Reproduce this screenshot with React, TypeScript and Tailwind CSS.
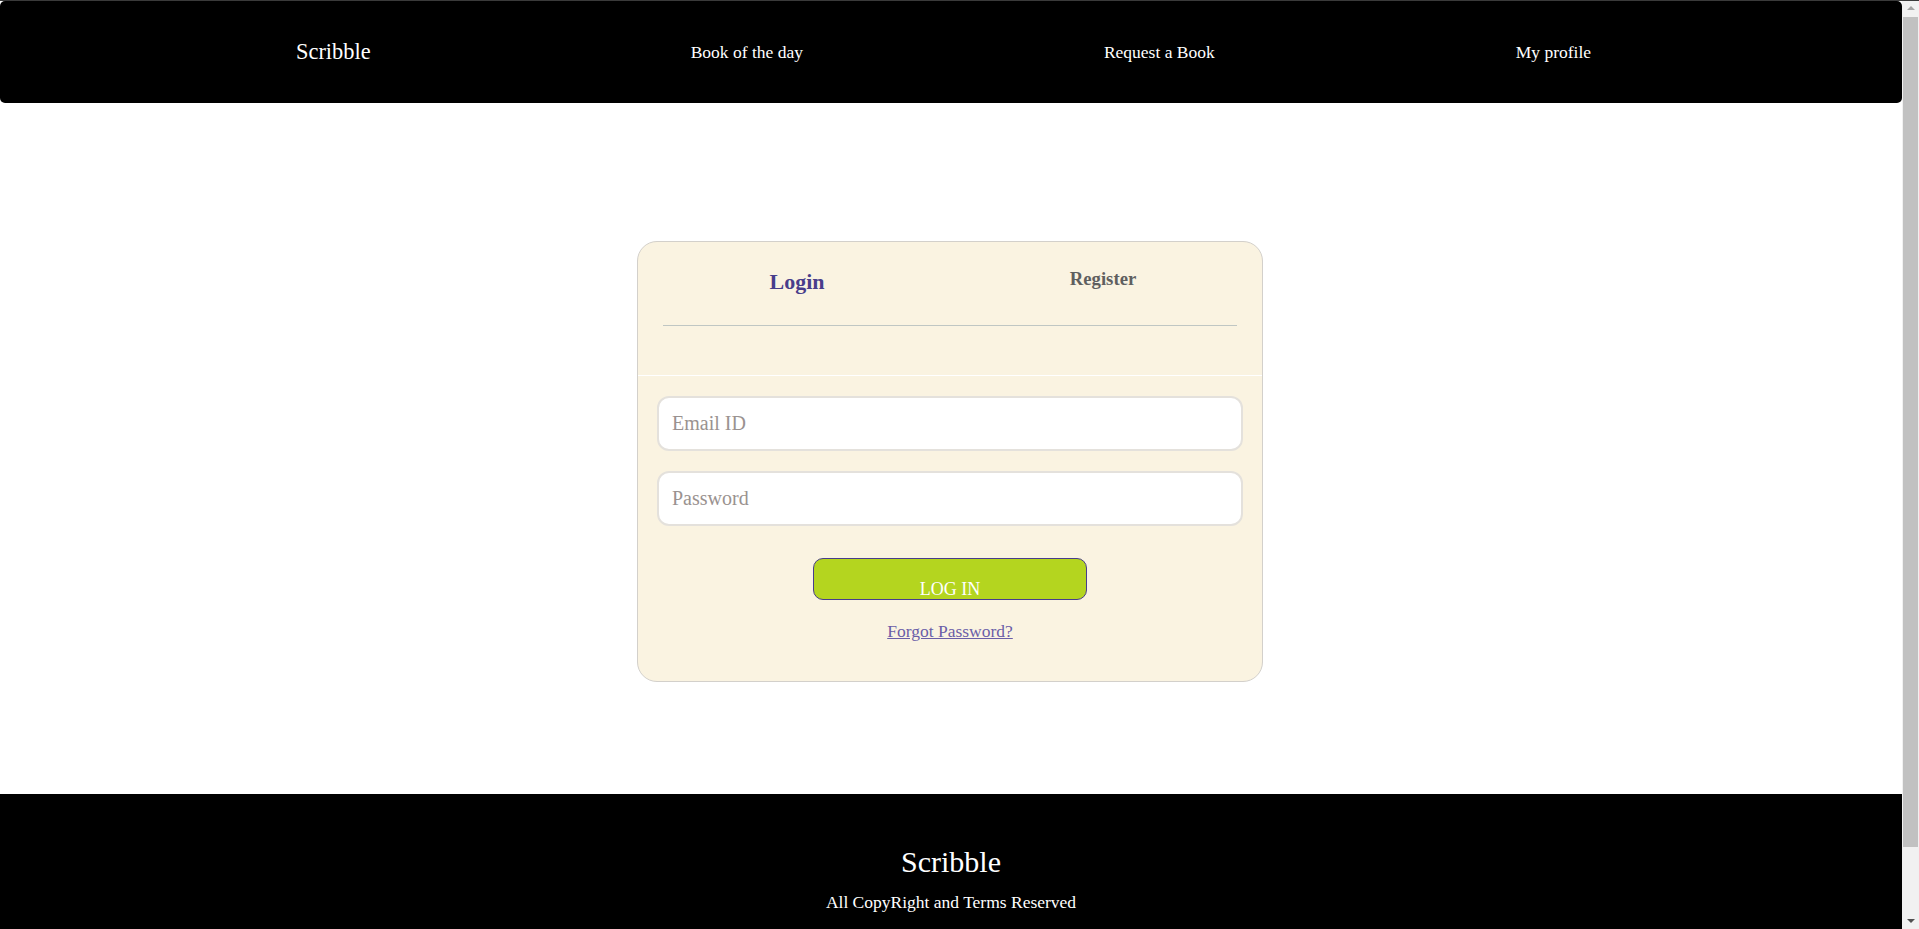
export default function App() {
  return (
    <div className="min-h-screen bg-white font-['Liberation_Serif',serif]">
      <div className="w-[1902px] border-t border-[#3a3a3a]">
        {/* Navbar */}
        <nav className="h-[102px] bg-black rounded-[5px] flex items-center text-white">
          <a href="#" className="ml-[296px] text-[22.4px] leading-[26px]">
            Scribble
          </a>
          <ul className="ml-[320px] flex gap-[301px] text-[17.5px] leading-[22px]">
            <li>
              <a href="#">Book of the day</a>
            </li>
            <li>
              <a href="#">Request a Book</a>
            </li>
            <li>
              <a href="#">My profile</a>
            </li>
          </ul>
        </nav>

        {/* Login card */}
        <div className="mx-auto mt-[138px] w-[626px] -translate-x-px rounded-[20px] border border-[#d3d0cb] bg-[#faf3e1]">
          <div className="pt-[26px]">
            <div className="grid grid-cols-2 items-start px-[6px]">
              <button className="pt-[1px] text-center text-[22px] leading-[26px] font-bold text-[#483d8b]">
                Login
              </button>
              <button className="text-center text-[18.72px] leading-[22px] font-bold text-[#5f5f5f]">
                Register
              </button>
            </div>
            <div className="mx-[25px] mt-[30px] h-px bg-[#bfc6c3]" />
            <div className="h-[49px]" />
            <div className="h-px bg-white" />
          </div>

          <form className="px-[19px] pt-[20px] pb-[40px]" onSubmit={(e) => e.preventDefault()}>
            <div className="flex flex-col gap-[20px]">
              <input
                type="email"
                placeholder="Email ID"
                className="h-[55px] w-full rounded-[12px] border-2 border-[#e4e1dc] bg-white pl-[13px] text-[20px] outline-none placeholder:text-[#9a9290]"
              />
              <input
                type="password"
                placeholder="Password"
                className="h-[55px] w-full rounded-[12px] border-2 border-[#e4e1dc] bg-white pl-[13px] text-[20px] outline-none placeholder:text-[#9a9290]"
              />
            </div>
            <button
              type="submit"
              className="mx-auto mt-[32px] block h-[42px] w-[274px] rounded-[10px] border border-[#483d8b] bg-[#b4d51f] pt-[20px] text-[18px] leading-[20px] text-white"
            >
              LOG IN
            </button>
            <div className="mt-[21px] text-center text-[17.5px] leading-[20px]">
              <a href="#" className="text-[#6a5ea8] underline">
                Forgot Password?
              </a>
            </div>
          </form>
        </div>

        {/* Footer */}
        <footer className="mt-[112px] h-[220px] bg-black pt-[50px] text-center text-white">
          <h2 className="text-[30px] leading-[36px]">Scribble</h2>
          <p className="mt-[12px] text-[17.5px] leading-[20px]">All CopyRight and Terms Reserved</p>
        </footer>
      </div>

      {/* window scrollbar */}
      <div className="fixed top-0 right-0 flex h-screen w-[17px] flex-col items-center border-t border-[#3a3a3a] bg-[#f1f1f1]">
        <div className="mt-[5px] h-0 w-0 border-x-[4px] border-b-[4px] border-x-transparent border-b-[#a3a3a3]" />
        <div className="mt-[7px] h-[830px] w-[15px] bg-[#c1c1c1]" />
        <div className="mt-auto mb-[6px] h-0 w-0 border-x-[4px] border-t-[4px] border-x-transparent border-t-[#505050]" />
      </div>
    </div>
  );
}
